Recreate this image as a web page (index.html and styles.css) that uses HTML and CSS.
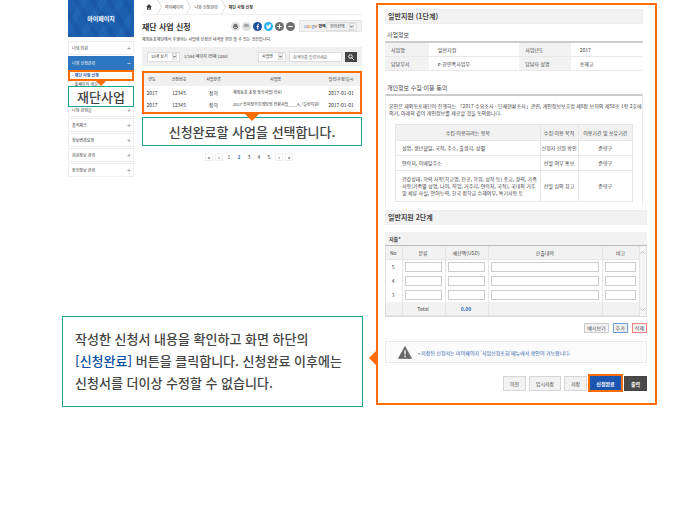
FILE: index.html
```html
<!DOCTYPE html>
<html lang="ko">
<head>
<meta charset="utf-8">
<title>재단 사업 신청</title>
<link rel="stylesheet" href="styles.css">
</head>
<body>
<main class="guide">
  <div class="left">
    <div class="screen">
      <nav class="side">
        <div class="banner">마이페이지</div>
        <ul class="menu">
          <li><a class="item" href="#">나의 민원<span class="sign">+</span></a></li>
          <li><a class="item active" href="#">나의 신청관리<span class="sign">−</span></a>
            <div class="sub">
              <a class="marked" href="#">- 재단 사업 신청</a>
              <a href="#">- 홈페이지 개설</a>
              <div class="callout side-callout">재단사업</div>
            </div>
          </li>
          <li><a class="item" href="#">나의 강의실<span class="sign">+</span></a></li>
          <li><a class="item" href="#">출석체크<span class="sign">+</span></a></li>
          <li><a class="item" href="#">정보변경요청<span class="sign">+</span></a></li>
          <li><a class="item" href="#">회원정보 관리<span class="sign">+</span></a></li>
          <li><a class="item" href="#">장학정보 관리<span class="sign">+</span></a></li>
        </ul>
      </nav>
      <section class="content">
        <div class="crumbs">
          <a class="home" href="#" aria-label="홈"><svg viewBox="0 0 12 12" width="6" height="6"><path d="M6 0 12 6H10V12H7V8H5V12H2V6H0Z" fill="#444"/></svg></a>
          <svg class="sep" viewBox="0 0 5 14"><path d="M.5 0 4.500 7 .5 14" fill="none" stroke="#ddd"/></svg>
          <a href="#">마이페이지</a>
          <svg class="sep" viewBox="0 0 5 14"><path d="M.5 0 4.500 7 .5 14" fill="none" stroke="#ddd"/></svg>
          <a href="#">나의 신청관리</a>
          <svg class="sep" viewBox="0 0 5 14"><path d="M.5 0 4.500 7 .5 14" fill="none" stroke="#ddd"/></svg>
          <b>재단 사업 신청</b>
        </div>
        <div class="heading">
          <h1>재단 사업 신청</h1>
          <div class="tools">
            <button class="round" aria-label="인쇄"><svg viewBox="0 0 18 18"><circle cx="9" cy="9" r="9" fill="#dedede"/><path d="M6 4h6v3H6zM4 7h10v5h-2v-2H6v2H4zM6 11h6v3H6z" fill="#777"/></svg></button>
            <button class="round url">URL</button>
            <button class="round" aria-label="페이스북"><svg viewBox="0 0 18 18"><circle cx="9" cy="9" r="9" fill="#1f4fa0"/><path d="M12 4.500h-1c-1.500 0-1.500.5-1.500 2V15M7 9h5" fill="none" stroke="#fff" stroke-width="2"/></svg></button>
            <button class="round" aria-label="트위터"><svg viewBox="0 0 18 18"><circle cx="9" cy="9" r="9" fill="#25b3ee"/><path d="M4 5q2 2.500 5 2.500 0-3 2.500-3 1 0 1.500.7l1.500-.5-.7 1.500q0 7-6.300 7.500-2 0-3.500-1 2 0 3-1-2-.5-2.300-2h1Q4 9 4 5Z" fill="#fff"/></svg></button>
            <button class="round" aria-label="확대"><svg viewBox="0 0 18 18"><circle cx="9" cy="9" r="9" fill="#707070"/><path d="M4.500 9h9M9 4.500v9" stroke="#fff" stroke-width="2"/></svg></button>
            <button class="round" aria-label="축소"><svg viewBox="0 0 18 18"><circle cx="9" cy="9" r="9" fill="#707070"/><path d="M4.500 9h9" stroke="#fff" stroke-width="2"/></svg></button>
          </div>
          <div class="translate">
            <span><i class="g1">G</i><i class="g2">o</i><i class="g3">o</i><i class="g1">g</i><i class="g4">l</i><i class="g2">e</i> <b>번역</b></span>
            <label class="pick"><select aria-label="언어선택"><option>언어선택</option></select><svg viewBox="0 0 10 14"><rect x=".5" y=".5" width="9" height="13" fill="#f2f2f2" stroke="#ccc"/><path d="M2.500 5.500 5 8.500 7.500 5.500" fill="none" stroke="#333" stroke-width="1.500"/></svg></label>
          </div>
        </div>
        <p class="lead">재외동포재단에서 수행하는 사업에 신청한 내역을 확인 할 수 있는 공간입니다.</p>
        <form class="filter">
          <label class="pick"><select aria-label="보기 개수"><option>10개 보기</option></select><svg viewBox="0 0 10 14"><rect x=".5" y=".5" width="9" height="13" fill="#f2f2f2" stroke="#ccc"/><path d="M2.500 5.500 5 8.500 7.500 5.500" fill="none" stroke="#333" stroke-width="1.500"/></svg></label>
          <span class="count">1/164 페이지 (전체 1200)</span>
          <label class="pick"><select aria-label="검색 구분"><option>사업명</option></select><svg viewBox="0 0 10 14"><rect x=".5" y=".5" width="9" height="13" fill="#f2f2f2" stroke="#ccc"/><path d="M2.500 5.500 5 8.500 7.500 5.500" fill="none" stroke="#333" stroke-width="1.500"/></svg></label>
          <input class="query" type="text" aria-label="검색어" placeholder="검색어를 입력하세요">
          <button class="search" type="button" aria-label="검색"><svg viewBox="0 0 12 12" width="6" height="6"><circle cx="5" cy="5" r="3.500" fill="none" stroke="#fff" stroke-width="2"/><path d="m7.500 7.500 4 4" stroke="#fff" stroke-width="2"/></svg></button>
        </form>
        <div class="list">
          <table>
            <colgroup><col class="w-year"><col class="w-no"><col class="w-kind"><col><col class="w-date"></colgroup>
            <thead><tr><th>연도</th><th>신청번호</th><th>사업분류</th><th>사업명</th><th>입력(수정)일시</th></tr></thead>
            <tbody>
              <tr><td>2017</td><td>12345</td><td>장학</td><td class="name">재외동포 초청 장학사업(학사)</td><td>2017-01-01</td></tr>
              <tr><td>2017</td><td>12345</td><td>장학</td><td class="name">2017 전자정부프레임웍 전환사업____A_(일반지원)</td><td>2017-01-01</td></tr>
            </tbody>
          </table>
        </div>
        <div class="callout list-callout">신청완료할 사업을 선택합니다.</div>
        <nav class="pages">
          <a class="box" href="#">«</a><a class="box" href="#">‹</a><a href="#">1</a><a class="now" href="#">2</a><a href="#">3</a><a href="#">4</a><a href="#">5</a><a class="box" href="#">›</a><a class="box" href="#">»</a>
        </nav>
      </section>
    </div>
    <p class="note">작성한 신청서 내용을 확인하고 화면 하단의<br><strong>[신청완료]</strong> 버튼을 클릭합니다. 신청완료 이후에는<br>신청서를 더이상 수정할 수 없습니다.</p>
  </div>

  <section class="panel">
    <div class="step one">
      <h2>일반지원 (1단계)</h2>
      <h3>사업정보</h3>
      <table class="info">
        <colgroup><col class="c17"><col class="c35"><col class="c20"><col></colgroup>
        <tr><th>사업명</th><td>일반지원</td><th>사업년도</th><td>2017</td></tr>
        <tr><th>담당부서</th><td>e-한민족사업부</td><th>담당자 성명</th><td>송혜교</td></tr>
      </table>
      <h3 class="consent-title">개인정보 수집·이용 동의</h3>
      <div class="consent">
        <p>본인은 재외동포재단이 진행하는 「2017 수요조사 - 단체현황조사」관련, 개인정보보호법 제8장 보칙의 제58조 1항 2호에<br>의거, 아래와 같이 개인정보를 제공할 것을 동의합니다.</p>
        <table class="terms">
          <colgroup><col><col class="c16"><col class="c23"></colgroup>
          <thead><tr><th>수집·이용하려는 항목</th><th>수집·이용 목적</th><th>이용기간 및 보유기간</th></tr></thead>
          <tbody>
            <tr><td>성명, 생년월일, 국적, 주소, 출생지, 성별</td><td>신청자 신원 확인</td><td>준영구</td></tr>
            <tr><td>연락처, 이메일주소</td><td>선발 여부 통보</td><td>준영구</td></tr>
            <tr class="tall"><td>건강상태, 학력 사항(학교명, 전공, 학위, 성적 등) 종교, 경력, 가족<br>사항(가족별 성명, 나이, 직업, 거주지, 연락처, 국적), 국내외 거주<br>및 체류 사실, 언어능력, 한국 장학금 수혜여부, 특기사항 등</td><td>선발 심의 참고</td><td>준영구</td></tr>
          </tbody>
        </table>
      </div>
    </div>
    <div class="step two">
      <h2>일반지원 2단계</h2>
      <h4>지출*</h4>
      <div class="budget">
        <table>
          <colgroup><col class="b-no"><col class="b-kind"><col class="b-usd"><col><col class="b-etc"></colgroup>
          <thead><tr><th>No</th><th>분류</th><th>예산액(USD)</th><th>산출내역</th><th>비고</th></tr></thead>
          <tbody>
            <tr><td>5</td><td><input aria-label="5 분류"></td><td><input aria-label="5 예산액"></td><td><input aria-label="5 산출내역"></td><td><input aria-label="5 비고"></td></tr>
            <tr><td>4</td><td><input aria-label="4 분류"></td><td><input aria-label="4 예산액"></td><td><input aria-label="4 산출내역"></td><td><input aria-label="4 비고"></td></tr>
            <tr><td>3</td><td><input aria-label="3 분류"></td><td><input aria-label="3 예산액"></td><td><input aria-label="3 산출내역"></td><td><input aria-label="3 비고"></td></tr>
          </tbody>
          <tfoot><tr><td></td><td>Total</td><td class="sum">0.00</td><td></td><td></td></tr></tfoot>
        </table>
        <div class="scroll">
          <svg viewBox="0 0 10 6"><path d="M1 5 5 1 9 5" fill="none" stroke="#aaa" stroke-width="1.500"/></svg>
          <svg viewBox="0 0 10 6"><path d="M1 1 5 5 9 1" fill="none" stroke="#aaa" stroke-width="1.500"/></svg>
        </div>
      </div>
      <div class="row-actions">
        <button>예시보기</button><button class="add">추가</button><button class="del">삭제</button>
      </div>
      <div class="notice">
        <svg viewBox="0 0 42 38" width="14" height="13"><path d="M21 1 41 37H1Z" fill="#666" stroke="#666" stroke-linejoin="round" stroke-width="2"/><path d="M21 12v13M21 28v5" stroke="#fff" stroke-width="4"/></svg>
        <span>• 저장된 신청서는 마이페이지 '사업신청조회'메뉴에서 확인이 가능합니다.</span>
      </div>
      <div class="actions">
        <button>이전</button><button class="wide">임시저장</button><button>저장</button><button class="submit">신청완료</button><button class="print">출력</button>
      </div>
    </div>
  </section>
</main>
</body>
</html>
```
FILE: styles.css
```css
* { box-sizing: border-box; }
body {
  margin: 0;
  background: #fff;
  color: #444;
  font: 5px/7px "Noto Sans CJK KR", "Noto Sans", sans-serif;
  white-space: nowrap;
}
h1, h2, h3, h4, p, ul { margin: 0; padding: 0; }
ul { list-style: none; }
a { color: inherit; text-decoration: none; }
button, input, select { font: inherit; color: inherit; margin: 0; padding: 0; border-radius: 0; }
table { width: 100%; border-collapse: collapse; table-layout: fixed; }
th, td { padding: 0; font-weight: 400; text-align: center; }
svg { display: block; }

.guide {
  display: grid;
  grid-template-columns: minmax(0, 301fr) minmax(0, 281fr);
  gap: 13px;
  align-items: start;
  padding: 0 43px 0 62px;
}
.screen {
  display: grid;
  grid-template-columns: minmax(0, 66fr) minmax(0, 220fr);
  gap: 8px;
  align-items: start;
  min-height: 316px;
  padding: 0 1px 0 6px;
  color: #333;
  font-size: 4px;
}

/* side menu */
.banner {
  height: 37px;
  margin-bottom: 4px;
  color: #fff;
  font-size: 6px;
  font-weight: 700;
  line-height: 38px;
  text-align: center;
  background:
    repeating-linear-gradient(60deg, transparent 0 9px, rgba(10, 60, 140, .2) 9px 14px),
    repeating-linear-gradient(-60deg, #1c5fae 0 10px, #2166b4 10px 16px);
}
.item {
  display: flex;
  justify-content: space-between;
  align-items: center;
  height: 14px;
  margin-bottom: 1px;
  padding: 0 2px 0 3px;
  border: 1px solid #eee;
}
.item.active { margin: 0; border-color: #2e76bf; background: #2e76bf; color: #fff; }
.sign { font-size: 7px; color: #888; }
.active .sign { color: #fff; }
.sub { position: relative; height: 33px; }
.sub a { display: block; height: 7px; padding-left: 4px; }
.sub .marked { height: 11px; padding-left: 2px; border: 2px solid #ff6c00; color: #1c5eae; font-weight: 700; }

/* callouts */
.callout {
  border: 1px solid #17a58f;
  background: #fff;
  color: #444;
  font-size: 13px;
  font-weight: 500;
  text-align: center;
}
.callout::before {
  content: "";
  position: absolute;
  left: 50%;
  top: -8px;
  border: 7px solid transparent;
  border-top-color: #ff6c00;
  border-bottom: 0;
  transform: translateX(-50%);
}
.side-callout { position: absolute; left: 0; right: 0; top: 16px; line-height: 19px; }
.list-callout { position: relative; margin-top: 3px; line-height: 27px; }
.list-callout::before { top: -4px; }

/* content */
.crumbs { display: flex; align-items: center; gap: 3px; height: 15px; padding-left: 4px; border-bottom: 1px solid #f0f0f0; }
.crumbs .home { margin-right: 2px; }
.crumbs .sep { width: 5px; height: 14px; }
.heading { display: flex; align-items: center; height: 22px; }
h1 { flex: 1; color: #333; font-size: 8px; }
.tools { display: flex; gap: 2px; margin-right: 4px; }
.round { width: 9px; height: 9px; border: 0; border-radius: 50%; background: none; }
.round.url { background: #dedede; font-size: 3px; text-align: center; }
.translate { display: flex; align-items: center; justify-content: space-between; width: 63px; height: 12px; padding: 0 4px; border: 1px solid #e5e5e5; background: #f2f2f2; }
.translate i { font-style: normal; }
.g1 { color: #3b78e7; }
.g2 { color: #e34133; }
.g3 { color: #f3b605; }
.g4 { color: #319f4f; }
.lead { line-height: 5px; margin-bottom: 5px; }
.filter { display: flex; align-items: center; height: 19px; padding: 0 5px; margin-bottom: 5px; background: #f0f0f0; }
.pick { display: flex; align-items: center; height: 10px; padding: 0 2px 0 3px; border: 1px solid #ddd; background: #fff; }
.pick select { appearance: none; border: 0; background: none; height: 8px; padding-right: 4px; }
.pick svg { width: 5px; height: 7px; }
.translate .pick { background: #f2f2f2; height: 9px; }
.count { flex: 1; padding-left: 4px; }
.query { width: 53px; height: 10px; margin: 0 3px; padding: 0 3px; border: 1px solid #ddd; background: #fff; }
.query::placeholder { color: #666; opacity: 1; }
.search { display: grid; place-items: center; width: 12px; height: 10px; border: 0; background: #444; }

.list { height: 43px; border: 2px solid #ff6c00; }
.list th { height: 13px; background: #f0f0f0; }
.list td { height: 12px; font-size: 5px; }
.list .name { padding-left: 4px; font-size: 4px; text-align: left; }
.w-year { width: 16px; }
.w-no { width: 38px; }
.w-kind { width: 31px; }
.w-date { width: 38px; }

.pages { display: flex; justify-content: center; gap: 2px; margin: 7px 0 0 -6px; font-size: 5px; }
.pages a { width: 8px; line-height: 8px; text-align: center; }
.pages .box { border: 1px solid #eee; line-height: 6px; font-weight: 700; }
.pages .now { color: #1f70bd; font-weight: 700; }

.note {
  padding: 11px 12px 12px;
  border: 1px solid #17a58f;
  font-size: 13px;
  font-weight: 500;
  line-height: 22px;
}
.note strong { color: #0b51a4; font-weight: 500; }

/* application form */
.panel { position: relative; margin-top: 3px; padding: 4px 8px 11px 7px; border: 2px solid #ff6c00; }
.panel::before {
  content: "";
  position: absolute;
  left: -9px;
  top: 346px;
  border: 7px solid transparent;
  border-right-color: #ff6c00;
  border-left: 0;
}
.one { margin-right: 4px; }
h2 { padding-left: 2px; border: 1px solid #eee; background: #f2f2f2; font-size: 7px; line-height: 13px; }
h3 { margin: 7px 0 2px; padding-left: 2px; font-size: 6px; font-weight: 400; line-height: 8px; }
.info { border-top: 2px solid #ccc; }
.info th, .info td { height: 14px; border-bottom: 1px solid #e8e8e8; text-align: left; }
.info th { padding-left: 6px; background: #f2f2f2; }
.info td { padding-left: 9px; }
.c17 { width: 17%; }
.c35 { width: 35%; }
.c20 { width: 20%; }
.consent-title { margin-top: 13px; }
.consent { padding: 6px 9px 4px; border: 1px solid #eee; border-top: 2px solid #ccc; border-bottom: 0; }
.consent p { margin: 0 -6px 8px; line-height: 7px; }
.terms th, .terms td { height: 15px; border: 1px solid #e5e5e5; }
.terms th { height: 16px; background: #f2f2f2; }
.terms td:first-child { padding-left: 6px; text-align: left; }
.terms .tall td { height: 31px; }
.c16 { width: 16%; }
.c23 { width: 23%; }

.two { margin-top: 4px; }
h4 { margin-top: 7px; padding-left: 4px; background: #f2f2f2; font-size: 5px; line-height: 13px; }
.budget { display: flex; border: 1px solid #ddd; border-top-color: #bbb; }
.budget table { flex: 1; width: auto; }
.budget th, .budget td { height: 14px; padding: 0 3px 0 2px; border-right: 1px solid #e5e5e5; }
.budget th, .budget tfoot td { background: #f2f2f2; border-bottom: 1px solid #e5e5e5; }
.budget input { display: block; width: 100%; height: 10px; border: 1px solid #ccc; background: #fff; }
.budget .sum { color: #1c68b5; font-weight: 700; }
.b-no { width: 16px; }
.b-kind, .b-usd { width: 43px; }
.b-etc { width: 37px; }
.scroll { display: flex; flex-direction: column; justify-content: space-between; width: 6px; padding: 5px 0; background: #f5f5f5; }
.scroll svg { width: 5px; height: 3px; }
.row-actions { display: flex; justify-content: flex-end; gap: 4px; margin: 6px 0 8px; }
.row-actions button { height: 10px; padding: 0 2px; border: 1px solid #ccc; background: #f2f2f2; line-height: 8px; }
.row-actions .add { border-color: #6f9bdc; }
.row-actions .del { border-color: #f07f7f; }
.notice { display: flex; align-items: center; gap: 6px; height: 22px; padding-left: 12px; border: 1px solid #eaeaea; background: #fbfbfb; color: #2a62ac; }
.actions { display: flex; justify-content: flex-end; align-items: center; gap: 3px; margin-top: 11px; }
.actions button { width: 23px; height: 15px; border: 1px solid #d5d5d5; background: #f2f2f2; }
.actions .wide { width: 32px; }
.actions .submit { width: 35px; height: 18px; margin: 0 -2px; border: 2px solid #ff6c00; background: #1a56b0; color: #fff; font-weight: 700; }
.actions .print { border-color: #444; background: #4a4a4a; color: #fff; font-weight: 700; }
```
